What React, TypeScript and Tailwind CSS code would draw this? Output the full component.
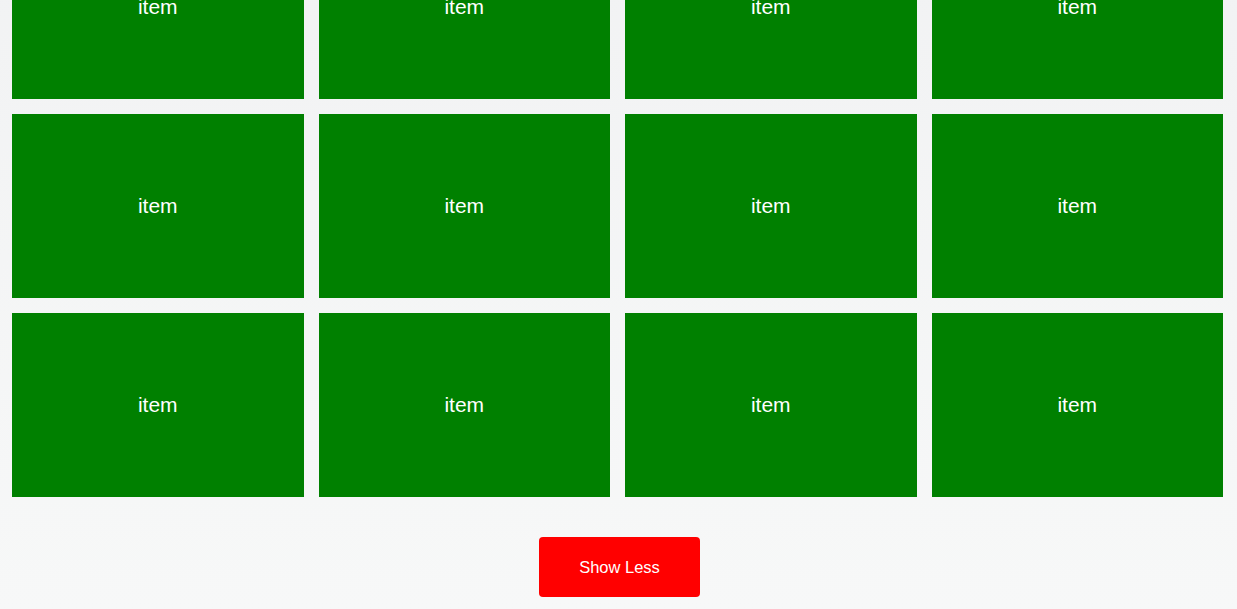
import React from "react";

export default function App() {
    const items = Array.from({ length: 12 }, (_, i) => i);

    React.useEffect(() => {
        window.scrollTo(0, document.body.scrollHeight);
    }, []);

    return (
        <div className="min-h-screen bg-gradient-to-b from-[#f1f2f3] to-[#f7f8f8] pt-3 pb-3 pl-3 pr-[14px] font-['Liberation_Sans',Arial,sans-serif]">
            <div className="grid grid-cols-4 gap-[15px]">
                {items.map((i) => (
                    <div key={i} className="h-[184px] bg-[#008000] flex items-center justify-center text-white text-[21px]">
                        item
                    </div>
                ))}
            </div>
            <div className="flex justify-center mt-10">
                <button className="ml-[4px] w-[161px] h-[60px] rounded bg-[#ff0000] text-white text-[16.5px]">Show Less</button>
            </div>
        </div>
    );
}
